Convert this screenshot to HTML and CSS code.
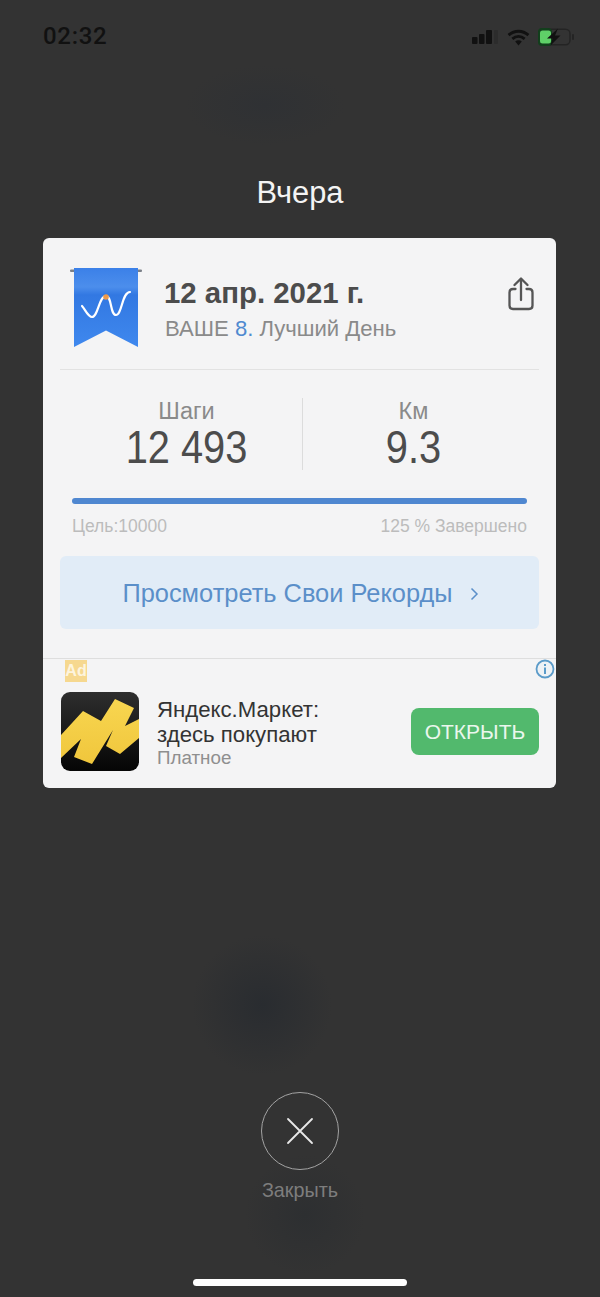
FILE: index.html
```html
<!DOCTYPE html>
<html lang="ru">
<head>
<meta charset="utf-8">
<title>Вчера</title>
<link rel="stylesheet" href="styles.css">
</head>
<body>
<div class="screen">
  <header class="status">
    <span class="time">02:32</span>
    <div class="status-icons">
      <svg class="signal" width="26" height="14" viewBox="0 0 26 14"><rect x="0" y="7" width="5.500" height="7" rx="1" fill="#111"/><rect x="7" y="4" width="5.500" height="10" rx="1" fill="#111"/><rect x="14" y="0" width="6" height="14" rx="1" fill="#111"/><rect x="22" y="0" width="4" height="14" rx="1" fill="#2c2c2c"/></svg>
      <svg class="wifi" width="23" height="17" viewBox="0 0 24 18"><path d="M1.500 6.500C7.500 1 16.500 1 22.500 6.500M5.500 10.500C9.500 7 14.500 7 18.500 10.500" fill="none" stroke="#111" stroke-width="3"/><path d="M8.500 13.300C10.500 11.600 13.500 11.600 15.500 13.300L12 17.500Z" fill="#111"/></svg>
      <svg class="battery" width="37" height="18" viewBox="0 0 37 18"><rect x="1" y="1.200" width="31" height="15.600" rx="4.500" fill="none" stroke="#242424" stroke-width="1.500"/><rect x="0" y="0" width="14" height="18" rx="4" fill="#123f1c"/><rect x="2" y="2.500" width="11" height="13" rx="2.500" fill="#5fd068"/><path d="M20 0.500L9 10.500H14.500L12.500 17.500L22.500 7.500H17Z" fill="#111"/><rect x="34" y="6" width="2" height="6" rx="1" fill="#242424"/></svg>
    </div>
  </header>

  <h1 class="heading">Вчера</h1>

  <main class="card">
    <section class="head">
      <svg class="ribbon" width="72" height="84" viewBox="0 0 72 84">
        <defs><linearGradient id="rib" x1="0" y1="0" x2="0" y2="1"><stop offset="0" stop-color="#3b80e8"/><stop offset="0.24" stop-color="#4c8eec"/><stop offset="0.34" stop-color="#3278e2"/><stop offset="1" stop-color="#3f88ee"/></linearGradient></defs>
        <rect x="0" y="4.500" width="72" height="2.500" rx="1" fill="#7b8088"/>
        <path d="M4 3H68V82L36 65.500L4 82Z" fill="url(#rib)"/>
        <path d="M12 41C15 44 18 52 22 52C28 52 29 31 36 31C42 31 40 50 46 50C52 50 52 27 60 27" fill="none" stroke="#fff" stroke-width="2.200" stroke-linecap="round"/>
        <circle cx="36" cy="32" r="2.800" fill="#ee9a4a"/>
      </svg>
      <div class="head-text">
        <div class="date">12 апр. 2021 г.</div>
        <div class="rank">ВАШЕ <span class="accent">8.</span> Лучший День</div>
      </div>
      <svg class="share" width="26" height="34" viewBox="0 0 26 34"><path d="M7.500 12H5Q1.500 12 1.500 15.500V28.500Q1.500 32 5 32H21Q24.500 32 24.500 28.500V15.500Q24.500 12 21 12H18.500M13 23V2M6.500 8L13 1.500L19.500 8" fill="none" stroke="#555" stroke-width="2.300" stroke-linecap="round" stroke-linejoin="round"/></svg>
    </section>

    <section class="stats">
      <div class="stat"><div class="stat-label">Шаги</div><div class="stat-value">12 493</div></div>
      <div class="stat"><div class="stat-label">Км</div><div class="stat-value">9.3</div></div>
    </section>

    <section class="progress">
      <div class="bar"></div>
      <div class="bar-labels"><span>Цель:10000</span><span>125 % Завершено</span></div>
    </section>

    <a class="records">Просмотреть Свои Рекорды<svg class="chev" width="9" height="14" viewBox="0 0 9 14"><path d="M1.500 1.500L7 7L1.500 12.500" fill="none" stroke="#5b8fc9" stroke-width="1.500"/></svg></a>

    <section class="ad">
      <span class="ad-badge">Ad</span>
      <svg class="ad-info" width="20" height="20" viewBox="0 0 20 20"><circle cx="10" cy="10" r="8.500" fill="#eef2f5" stroke="#5b9bc9" stroke-width="1.800"/><rect x="9" y="8.500" width="2" height="6.500" fill="#5b9bc9"/><rect x="9" y="5" width="2" height="2" fill="#5b9bc9"/></svg>
      <div class="ad-row">
        <svg class="ad-logo" width="78" height="79" viewBox="0 0 78 79">
          <defs><linearGradient id="lg" x1="0" y1="0" x2="0" y2="1"><stop offset="0" stop-color="#2e2e2e"/><stop offset="1" stop-color="#050505"/></linearGradient>
          <linearGradient id="ly" x1="0" y1="0" x2="0" y2="1"><stop offset="0" stop-color="#f8d650"/><stop offset="1" stop-color="#f0c63c"/></linearGradient>
          <clipPath id="lc"><rect width="78" height="79" rx="9"/></clipPath></defs>
          <rect width="78" height="79" rx="9" fill="url(#lg)"/>
          <path clip-path="url(#lc)" d="M0 43L22 19L40 29L33 40L54 7L73 16L64 34L78 27V46L59 62L45 54L52 38L31 72L13 65L20 47L0 66Z" fill="url(#ly)"/>
        </svg>
        <div class="ad-text">
          <div class="ad-title">Яндекс.Маркет:<br>здесь покупают</div>
          <div class="ad-sub">Платное</div>
        </div>
        <a class="open">ОТКРЫТЬ</a>
      </div>
    </section>
  </main>

  <footer class="foot">
    <div class="close">
      <svg width="28" height="28" viewBox="0 0 28 28"><path d="M2 2L26 26M26 2L2 26" stroke="#e8e8e8" stroke-width="1.800" stroke-linecap="round"/></svg>
    </div>
    <div class="close-label">Закрыть</div>
    <div class="home"></div>
  </footer>
</div>
</body>
</html>
```

FILE: styles.css
```css
* { box-sizing: border-box; }
html, body { margin: 0; padding: 0; }
body {
  width: 600px;
  height: 1297px;
  overflow: hidden;
  font-family: "Liberation Sans", Arial, sans-serif;
  background: #333333;
}
.screen {
  height: 1297px;
  display: flex;
  flex-direction: column;
  background:
    radial-gradient(circle 70px at 262px 1005px, #292c30 0%, rgba(41,44,48,0) 100%),
    radial-gradient(circle 60px at 305px 1215px, #2d2f31 0%, rgba(45,47,49,0) 100%),
    radial-gradient(ellipse 80px 40px at 265px 105px, #2f3134 0%, rgba(47,49,52,0) 100%),
    #333333;
}
.status {
  height: 72px;
  padding: 22px 25px 0 43px;
  display: flex;
  justify-content: space-between;
  align-items: flex-start;
}
.time {
  font-family: Roboto, sans-serif;
  font-size: 24px;
  line-height: 28px;
  font-weight: 500;
  letter-spacing: 0.7px;
  color: #111;
}
.status-icons { display: flex; align-items: center; gap: 9px; padding-top: 6px; }
.battery { margin-left: -1px; }
.heading {
  margin: 0;
  height: 166px;
  padding-top: 104px;
  font-size: 30.800px;
  line-height: 34px;
  font-weight: 400;
  color: #f4f4f4;
  text-align: center;
}
.card {
  position: relative;
  width: 513px;
  height: 550px;
  margin-left: 43px;
  background: #f4f4f5;
  border-radius: 6px;
  padding: 0 17px;
  display: flex;
  flex-direction: column;
}
.head {
  height: 132px;
  padding: 27px 5px 0 10px;
  border-bottom: 1px solid #e2e2e2;
  display: flex;
  align-items: flex-start;
}
.ribbon { flex: none; }
.head-text { flex: 1; margin-left: 22px; padding-top: 9px; }
.date { font-size: 29.400px; line-height: 38px; font-weight: 700; color: #4c4c4c; }
.rank { font-size: 22.100px; line-height: 30px; color: #8a8a8a; margin-top: 2px; padding-left: 1px; }
.accent { color: #4f8ad0; }
.share { margin-top: 12px; }
.stats {
  margin-top: 28px;
  height: 72px;
  display: grid;
  grid-template-columns: 243px 236px;
}
.stat { text-align: center; }
.stat:first-child { border-right: 1px solid #dcdcdc; padding-left: 11px; }
.stat + .stat { padding-right: 15px; }
.stat-label { font-size: 23.500px; line-height: 26px; color: #8a8a8a; }
.stat-value {
  font-size: 46px;
  line-height: 46px;
  color: #4c4c4c;
  transform: scaleX(0.865);
}
.progress { margin-top: 28px; padding: 0 12px; }
.bar { height: 6px; border-radius: 3px; background: #4f87d0; }
.bar-labels {
  margin-top: 12px;
  display: flex;
  justify-content: space-between;
  font-size: 17.500px;
  line-height: 20px;
  color: #bcbcbc;
}
.records {
  margin-top: 20px;
  height: 73px;
  border-radius: 6px;
  background: #e1ecf7;
  display: flex;
  align-items: center;
  justify-content: center;
  gap: 17px;
  font-size: 25.400px;
  color: #5b8fc9;
  padding: 2px 0 0 2px;
}
.ad {
  position: relative;
  margin: 29px -17px 0;
  border-top: 1px solid #dedede;
  flex: 1;
  padding: 1px 17px 0 18px;
}
.ad-badge {
  display: block;
  width: 22px;
  height: 22px;
  margin-left: 4px;
  background: #f6d88f;
  color: #fdf4de;
  font-size: 16px;
  line-height: 22px;
  font-weight: 700;
  text-align: center;
}
.ad-info { position: absolute; top: 0; right: 1px; }
.ad-row { display: flex; align-items: flex-start; margin-top: 10px; }
.ad-logo { flex: none; }
.ad-text { flex: 1; margin-left: 18px; padding-top: 5px; }
.ad-title { font-size: 22.200px; line-height: 25px; color: #333; }
.ad-sub { font-size: 18.800px; line-height: 20px; color: #8f8f8f; margin-top: 1px; }
.open {
  width: 128px;
  height: 47px;
  margin-top: 16px;
  border-radius: 8px;
  background: #52b96d;
  color: #eaf7ed;
  font-size: 21px;
  line-height: 47px;
  text-align: center;
}
.foot {
  margin-top: 304px;
  display: flex;
  flex-direction: column;
  align-items: center;
}
.close {
  width: 78px;
  height: 78px;
  border-radius: 50%;
  border: 1.500px solid #a3a3a3;
  display: flex;
  align-items: center;
  justify-content: center;
}
.close-label { margin-top: 8px; font-size: 19.800px; line-height: 24px; color: #7d7d7d; }
.home { margin-top: 77px; width: 214px; height: 7px; border-radius: 4px; background: #fff; }
```
